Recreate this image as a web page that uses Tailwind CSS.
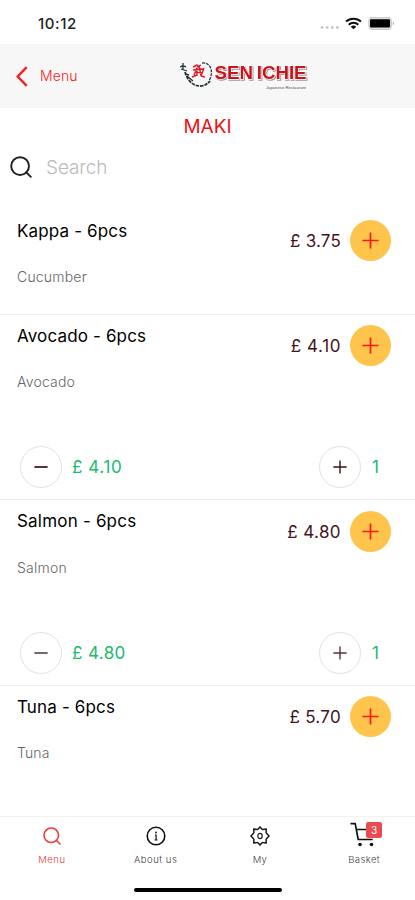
<!DOCTYPE html>
<html lang="en">
<head>
<meta charset="utf-8">
<title>Sen Ichie – Maki</title>
<script src="https://cdn.jsdelivr.net/npm/@tailwindcss/browser@4"></script>
</head>
<body class="bg-white">
<svg class="hidden">
  <symbol id="plus" viewBox="0 0 18 18"><path d="M9 .5v17M.5 9h17" fill="none" stroke="currentColor" stroke-width="1.8"/></symbol>
  <symbol id="minus" viewBox="0 0 18 18"><path d="M.5 9h17" fill="none" stroke="currentColor" stroke-width="2.2"/></symbol>
  <symbol id="search" viewBox="0 0 24 24"><g fill="none" stroke="currentColor" stroke-width="2.1"><circle cx="11" cy="11" r="9.7"/><path d="M17.7 17.7l5 5" stroke-linecap="round"/></g></symbol>
</svg>
<div class="w-[415px] h-[900px] flex flex-col overflow-hidden bg-white text-black font-['Inter','Liberation_Sans',sans-serif]">
  <div class="h-[44px] shrink-0 flex items-center justify-between pl-[38px] pr-[20px] pt-[3px]">
    <span class="text-[15px] leading-5 font-medium tracking-[0.6px] text-[#222]">10:12</span>
    <div class="flex items-center">
      <svg class="w-[20px] h-[16px]" viewBox="0 0 20 16" fill="#bbb"><circle cx="2" cy="11.5" r="1.3"/><circle cx="7.2" cy="11.5" r="1.3"/><circle cx="12.3" cy="11.5" r="1.3"/><circle cx="17.4" cy="11.5" r="1.3"/></svg>
      <svg class="w-[17px] h-[13px] ml-[5px]" viewBox="0 0 17 13"><g fill="none" stroke="#111" stroke-width="2"><path d="M1 4.6a11 11 0 0 1 15 0"/><path d="M3.7 7.7a7 7 0 0 1 9.6 0"/></g><path d="M8.5 12.3L5.7 9.7a4.2 4.2 0 0 1 5.6 0z" fill="#111"/></svg>
      <svg class="w-[27px] h-[14px] ml-[6px]" viewBox="0 0 27 14"><rect x=".8" y=".3" width="22.6" height="12.2" rx="3.2" fill="#ddd" stroke="#c8c8c8"/><rect x="2" y="2.2" width="20" height="8.4" rx="1" fill="#000"/><path d="M24.8 4.3q2.2 2.1 0 4.2z" fill="#aaa"/></svg>
    </div>
  </div>

  <header class="h-[64px] shrink-0 bg-[#f7f7f7] flex items-center">
    <div class="flex items-center w-[180px] pl-[16px] text-[#f52222]">
      <svg class="w-[12px] h-[21px]" viewBox="0 0 12 21"><path d="M10.7 1.2L1.7 10.5l9 9.3" fill="none" stroke="currentColor" stroke-width="2.5"/></svg>
      <span class="ml-[12px] text-[14px] leading-5 font-light tracking-[0.1px]">Menu</span>
    </div>
    <svg class="w-[130px] h-[34px]" viewBox="0 0 130 34">
      <g fill="none" stroke="#26343a">
        <path d="M5 13C7 20 12 27 20 27q6 0 10-5" stroke-width="1.8" stroke-dasharray="3.5 .9"/>
        <path d="M22 3.8q7 0 9 6 1.5 6-2 12" stroke-width="1.3" stroke-dasharray="3 1"/>
        <path d="M0 8q3-2 6 0M3 4v7M1 10l6 2M7 17l6 5M5 15l4 1" stroke-width="1.3"/>
      </g>
      <path d="M13 8l4-2 1 2 3-2M13 11l10-1M14 16l3-7v8M19 6l2 11M24 9l-3 8M12 18l5-2M21 17l4 1M15 13l8 1" fill="none" stroke="#d92027" stroke-width="1.4"/>
      <text class="[filter:drop-shadow(1.3px_1.3px_0.3px_#999)]" x="34.6" y="20.2" textLength="92" lengthAdjust="spacingAndGlyphs" word-spacing="-1.5" font-family="Liberation Sans, Arial, sans-serif" font-weight="bold" font-size="18.8" fill="#c9141e" stroke="#fff" stroke-width="1.4" paint-order="stroke">SEN ICHIE</text>
      <text x="86" y="29.6" font-family="Liberation Sans, Arial, sans-serif" font-size="4.2" fill="#555" textLength="40" lengthAdjust="spacingAndGlyphs">Japanese Restaurant</text>
    </svg>
  </header>

  <h1 class="h-[36px] shrink-0 text-center text-[19px] leading-[37px] text-[#ed1118]">MAKI</h1>
  <div class="h-[46px] shrink-0 flex items-center pl-[10px]">
    <svg class="w-[22px] h-[22px] text-[#222]"><use href="#search"/></svg>
    <span class="ml-[14px] pt-[2px] text-[19px] leading-6 font-light tracking-[-0.1px] text-[#bbb]">Search</span>
  </div>

  <main class="flex-1 min-h-0 flex flex-col pt-[20px]">
    <section class="h-[105px] shrink-0 border-b border-[#eee] flex flex-col">
      <div class="flex justify-between pl-[17px] pr-[24px]">
        <div><h2 class="mt-[9px] text-[17px] leading-6 tracking-[0.15px]">Kappa - 6pcs</h2><p class="mt-[24px] text-[14px] leading-5 font-light tracking-[0.2px] text-[#666]">Cucumber</p></div>
        <div class="flex items-center h-[41px] mt-[10px] text-[17px] tracking-[0.2px] text-[#42141a]"><span class="pt-[2px]">£ 3.75</span><button class="ml-[9px] w-[41px] h-[41px] rounded-full bg-[#fec44c] text-[#f51b12] flex items-center justify-center"><svg class="w-[17px] h-[17px]"><use href="#plus"/></svg></button></div>
      </div>
    </section>
    <section class="h-[185px] shrink-0 border-b border-[#eee] flex flex-col">
      <div class="flex justify-between pl-[17px] pr-[24px]">
        <div><h2 class="mt-[9px] text-[17px] leading-6 tracking-[0.15px]">Avocado - 6pcs</h2><p class="mt-[24px] text-[14px] leading-5 font-light tracking-[0.2px] text-[#666]">Avocado</p></div>
        <div class="flex items-center h-[41px] mt-[10px] text-[17px] tracking-[0.6px] text-[#42141a]"><span class="pt-[2px]">£ 4.10</span><button class="ml-[9px] w-[41px] h-[41px] rounded-full bg-[#fec44c] text-[#f51b12] flex items-center justify-center"><svg class="w-[17px] h-[17px]"><use href="#plus"/></svg></button></div>
      </div>
      <div class="mt-auto mb-[11px] flex items-center pl-[20px] pr-[34px] text-[17px] tracking-[0.6px] text-[#20b96e]">
        <button class="w-[42px] h-[42px] rounded-full border border-[#e2e2e2] text-[#3c1014] flex items-center justify-center"><svg class="w-[14px] h-[14px]"><use href="#minus"/></svg></button>
        <span class="ml-[10px] pt-[2px]">£ 4.10</span>
        <button class="ml-auto w-[42px] h-[42px] rounded-full border border-[#e2e2e2] text-[#3c1014] flex items-center justify-center"><svg class="w-[14px] h-[14px]"><use href="#plus"/></svg></button>
        <span class="ml-[11px] w-[9px] pt-[2px]">1</span>
      </div>
    </section>
    <section class="h-[186px] shrink-0 border-b border-[#eee] flex flex-col">
      <div class="flex justify-between pl-[17px] pr-[24px]">
        <div><h2 class="mt-[9px] text-[17px] leading-6 tracking-[0.2px]">Salmon - 6pcs</h2><p class="mt-[25px] text-[14px] leading-5 font-light tracking-[0.25px] text-[#666]">Salmon</p></div>
        <div class="flex items-center h-[41px] mt-[11px] text-[17px] tracking-[0.4px] text-[#42141a]"><span class="pt-[2px]">£ 4.80</span><button class="ml-[9px] w-[41px] h-[41px] rounded-full bg-[#fec44c] text-[#f51b12] flex items-center justify-center"><svg class="w-[17px] h-[17px]"><use href="#plus"/></svg></button></div>
      </div>
      <div class="mt-auto mb-[11px] flex items-center pl-[20px] pr-[34px] text-[17px] tracking-[0.4px] text-[#20b96e]">
        <button class="w-[42px] h-[42px] rounded-full border border-[#e2e2e2] text-[#684b50] flex items-center justify-center"><svg class="w-[14px] h-[14px]"><use href="#minus"/></svg></button>
        <span class="ml-[10px] pt-[2px]">£ 4.80</span>
        <button class="ml-auto w-[42px] h-[42px] rounded-full border border-[#e2e2e2] text-[#58333a] flex items-center justify-center"><svg class="w-[14px] h-[14px]"><use href="#plus"/></svg></button>
        <span class="ml-[11px] w-[9px] pt-[2px]">1</span>
      </div>
    </section>
    <section class="flex-1 flex flex-col">
      <div class="flex justify-between pl-[17px] pr-[24px]">
        <div><h2 class="mt-[9px] text-[17px] leading-6 tracking-[0.15px]">Tuna - 6pcs</h2><p class="mt-[24px] text-[14px] leading-5 font-light tracking-[0.1px] text-[#666]">Tuna</p></div>
        <div class="flex items-center h-[41px] mt-[10px] text-[17px] tracking-[0.3px] text-[#42141a]"><span class="pt-[2px]">£ 5.70</span><button class="ml-[9px] w-[41px] h-[41px] rounded-full bg-[#fec44c] text-[#f51b12] flex items-center justify-center"><svg class="w-[17px] h-[17px]"><use href="#plus"/></svg></button></div>
      </div>
    </section>
  </main>

  <nav class="h-[84px] shrink-0 border-t border-[#f2f2f2] flex flex-col items-center">
    <div class="w-full h-[69px] grid grid-cols-4 text-[9.5px] leading-3 font-light text-[#444]">
      <a class="flex flex-col items-center pt-[9px] text-[#ed3b3b]"><svg class="w-[18px] h-[20px]"><use href="#search"/></svg><span class="mt-[8px] tracking-[0.5px]">Menu</span></a>
      <a class="flex flex-col items-center pt-[9px]"><svg class="w-[20px] h-[20px]" viewBox="0 0 20 20"><circle cx="10" cy="10" r="8.8" fill="none" stroke="#111" stroke-width="1.6"/><circle cx="10" cy="6.5" r=".9" fill="#111"/><path d="M9 9.2h1.1V14M8.6 14h3" fill="none" stroke="#111" stroke-width="1.2"/></svg><span class="mt-[8px] tracking-[0.5px]">About us</span></a>
      <a class="flex flex-col items-center pt-[9px] pl-[1px]"><svg class="w-[20px] h-[20px]" viewBox="0 0 20 20" fill="none" stroke="#1b1b1b" stroke-width="1.5" stroke-linejoin="round"><path d="M10 .9l2 2.300q.4.300 1 .2l3.300-.300-.2 3.200q0 .6.400 1L19.100 10l-2.600 2.700q-.4.400-.4 1l.2 3.200-3.300-.300q-.6-.1-1 .2l-2 2.300-2-2.300q-.4-.300-1-.2l-3.300.300.2-3.200q0-.6-.4-1L.9 10l2.600-2.700q.4-.4.400-1l-.2-3.200 3.300.300q.6.1 1-.2z"/><ellipse cx="10" cy="10" rx="2.200" ry="2.700" stroke-width="1.200"/></svg><span class="mt-[8px] tracking-[0.3px]">My</span></a>
      <a class="flex flex-col items-center pt-[5px] pl-[2px]"><span class="relative block w-[28px] h-[26px]"><svg class="w-[28px] h-[26px]" viewBox="0 0 28 26"><path d="M.5 1.700h4.700l3 15.800h14.500M6.300 7.500h18l-2 8" fill="none" stroke="#111" stroke-width="1.700" stroke-linejoin="round"/><circle cx="10" cy="22.500" r="1.800" fill="#111"/><circle cx="21.500" cy="22.500" r="1.800" fill="#111"/></svg><b class="absolute left-[16px] top-0 w-[16px] h-[16px] rounded-[2px] bg-[#e94c50] text-white text-[10px] leading-4 text-center">3</b></span><span class="mt-[6px] tracking-[0.4px]">Basket</span></a>
    </div>
    <div class="w-[148px] h-[4px] rounded-full bg-black mt-[2px]"></div>
  </nav>
</div>
</body>
</html>
